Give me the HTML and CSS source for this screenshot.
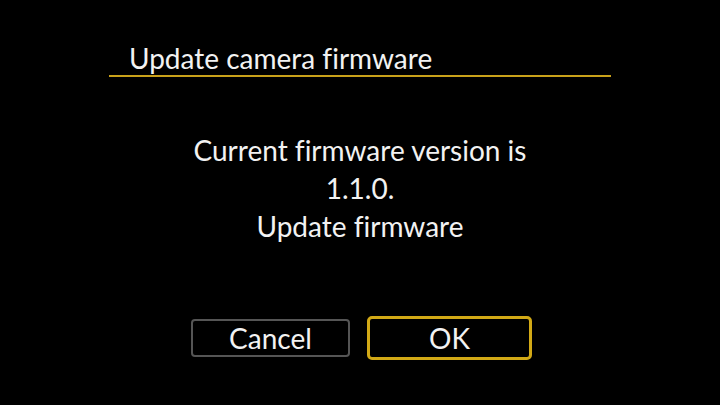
FILE: index.html
```html
<!DOCTYPE html>
<html>
<head>
<meta charset="utf-8">
<link rel="stylesheet" href="styles.css">
</head>
<body>
<div class="screen">
  <div class="header">Update camera firmware</div>
  <div class="message">
    <div>Current firmware version is</div>
    <div>1.1.0.</div>
    <div>Update firmware</div>
  </div>
  <div class="buttons">
    <div class="btn cancel">Cancel</div>
    <div class="btn ok">OK</div>
  </div>
</div>
</body>
</html>
```
FILE: styles.css
```css
html, body {
  margin: 0;
  padding: 0;
  background: #000;
}
.screen {
  width: 720px;
  height: 405px;
  background: #000;
  color: #f2f2f2;
  font-family: "Lato", "Open Sans", sans-serif;
  font-size: 28px;
  font-variant-ligatures: none;
  font-feature-settings: "liga" 0;
  overflow: hidden;
  display: flex;
  flex-direction: column;
}
.header {
  margin: 41px 0 0 109px;
  width: 482px;
  padding-left: 20px;
  line-height: 34px;
  border-bottom: 2px solid #c9a11a;
}
.message {
  margin-top: 54px;
  text-align: center;
  line-height: 38px;
}
.buttons {
  margin-top: 71px;
  display: flex;
  align-items: center;
  justify-content: center;
  gap: 17px;
  padding-left: 3px;
}
.btn {
  box-sizing: border-box;
  display: flex;
  align-items: center;
  justify-content: center;
  font-size: 28px;
}
.cancel {
  width: 159px;
  height: 38px;
  border: 2px solid #555;
  border-radius: 4px;
}
.ok {
  width: 165px;
  height: 44px;
  border: 3px solid #d2a916;
  border-radius: 5px;
}
```
